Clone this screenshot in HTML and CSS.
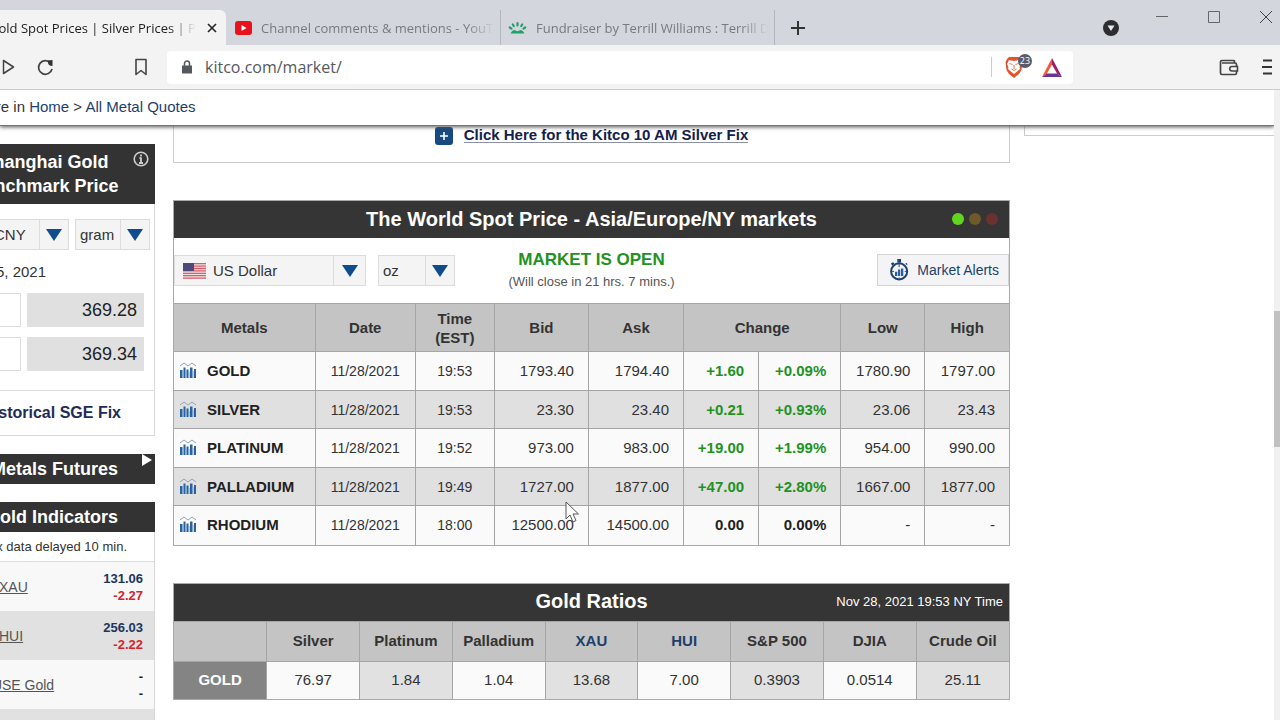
FILE: index.html
```
<!DOCTYPE html>
<html lang="en">
<head>
<meta charset="utf-8">
<title>Gold Spot Prices | Silver Prices | Platinum Prices</title>
<link rel="stylesheet" href="styles.css">
</head>
<body>
<svg class="defs" aria-hidden="true">
  <symbol id="chart" viewBox="0 0 18 18">
    <path fill="#2c62a0" d="M1 9h2.500v8H1zM4.500 6.500h2V17h-2zM7.500 8.500h2V17h-2zM11 6.500h2.500V17H11zM15 8h2v9h-2z"/>
    <path fill="#7fa6cf" d="M3.500 10h1v7h-1zM6.500 10h1v7h-1zM9.500 11h1v6h-1zM13.500 10h1v7h-1z"/>
    <path fill="none" stroke="#8fa3ba" stroke-width="1" d="M1 5l4-3 4 3 4-3 4 3"/>
  </symbol>
  <symbol id="down" viewBox="0 0 16 12"><path fill="#104d8e" d="M0 0h16L8 12z"/></symbol>
</svg>

<header class="tabs">
  <div class="tab active"><span class="tab-title">Gold Spot Prices | Silver Prices | P</span>
    <button class="icon" aria-label="Close tab"><svg width="12" height="12" viewBox="0 0 12 12"><path d="M2 2l8 8M10 2l-8 8" stroke="#222" stroke-width="1.600"/></svg></button>
  </div>
  <div class="tab yt">
    <svg width="17" height="14" viewBox="0 0 17 14"><rect width="17" height="14" rx="3" fill="#e8121c"/><path d="M6.500 4v6l5-3z" fill="#fff"/></svg>
    <span class="tab-title">Channel comments &amp; mentions - YouT</span>
  </div>
  <div class="tab fund">
    <svg width="20" height="14" viewBox="0 0 20 14" stroke="#22a06b" stroke-width="2.200" stroke-linecap="round"><path d="M9.500 2v2.500M4.800 3.500l1 1.500M14.200 3.500l-1 1.500M1.800 6.500l1.700 1.200M17.200 6.500l-1.700 1.200"/><path d="M2.500 12.500c1-2.500 3-3.500 4.500-3.500.8 1.500 4.200 1.500 5 0 1.500 0 3.500 1 4.500 3.500z" fill="#22a06b" stroke="none"/></svg>
    <span class="tab-title">Fundraiser by Terrill Williams : Terrill D</span>
  </div>
  <button class="icon plus" aria-label="New tab"><svg width="14" height="14" viewBox="0 0 14 14"><path d="M7 0v14M0 7h14" stroke="#333" stroke-width="2"/></svg></button>
  <div class="window">
    <button class="icon search" aria-label="Search tabs"><svg width="18" height="18" viewBox="0 0 18 18"><circle cx="9" cy="9" r="8" fill="#2b2d31"/><path d="M5.500 6.500h7L9 12z" fill="#e8e9ec"/></svg></button>
    <button class="icon" aria-label="Minimize"><svg width="14" height="14" viewBox="0 0 14 14"><path d="M1 6.500h12" stroke="#666"/></svg></button>
    <button class="icon" aria-label="Maximize"><svg width="14" height="14" viewBox="0 0 14 14"><path d="M1.500 1.500h11v11h-11z" fill="none" stroke="#666"/></svg></button>
    <button class="icon" aria-label="Close"><svg width="14" height="14" viewBox="0 0 14 14"><path d="M1 1l12 12M13 1L1 13" stroke="#444"/></svg></button>
  </div>
</header>

<nav class="toolbar" aria-label="Browser">
  <button class="icon forward" aria-label="Forward"><svg width="16" height="18" viewBox="0 0 16 18"><path d="M3.500 2.500v13l10-6.500z" fill="none" stroke="#444" stroke-width="1.500" stroke-linejoin="round"/></svg></button>
  <button class="icon reload" aria-label="Reload"><svg width="18" height="18" viewBox="0 0 18 18"><path d="M14.500 5A6.800 6.800 0 1 0 16 11" fill="none" stroke="#444" stroke-width="1.700"/><path d="M11.500 2.500l5-.5v6q-4 0-4.500-3z" fill="#333"/></svg></button>
  <button class="icon mark" aria-label="Bookmark"><svg width="14" height="18" viewBox="0 0 14 18"><path d="M2 1.500h10v15l-5-4-5 4z" fill="none" stroke="#444" stroke-width="1.600" stroke-linejoin="round"/></svg></button>
  <div class="address">
    <svg width="12" height="14" viewBox="0 0 12 14"><path d="M1 5.500h10v8H1z" fill="#55585c"/><path d="M3.500 6V3.500a2.500 2.500 0 0 1 5 0V6" fill="none" stroke="#55585c" stroke-width="1.500"/></svg>
    <input type="text" aria-label="Address" value="kitco.com/market/">
    <div class="shields">
      <svg width="20" height="23" viewBox="0 0 20 23"><path d="M5 1h10l2 2 1.500 3-1 8-2.500 4-5 4-5-4-2.500-4-1-8L3 3z" fill="#e4532a"/><path d="M5 4l5 1 5-1 2 4-1.500 3 .5 2-3.500 3L10 18l-2.500-2L4 13l.5-2L3 8z" fill="#fff"/><path d="M5.500 7.500l3 1M14.500 7.500l-3 1M10 9v4M7.500 13l2.500 1.500 2.500-1.500" stroke="#e07a58" stroke-width="1" fill="none"/></svg>
      <span class="badge">23</span>
    </div>
    <svg width="20" height="19" viewBox="0 0 20 19"><path d="M10 0v6.500L5 15.500 0 19z" fill="#ee5c36"/><path d="M10 0l10 19-5-3.500-5-9z" fill="#9b2069"/><path d="M0 19l5-3.500h10l5 3.500z" fill="#6a3591"/></svg>
  </div>
  <button class="icon wallet" aria-label="Wallet"><svg width="20" height="17" viewBox="0 0 20 17"><path d="M15.500 4V2.500Q15.500 1.500 14 1.500H3Q1.500 1.500 1.500 3v11Q1.500 15.500 3 15.500h13q1.500 0 1.500-1.500V5.500Q17.500 4 16 4H3" fill="none" stroke="#444" stroke-width="1.700"/><path d="M18.500 7.500H13a2 2 0 0 0 0 4.500h5.500z" fill="#f2f2f3" stroke="#444" stroke-width="1.600"/></svg></button>
  <button class="icon" aria-label="Menu"><svg width="11" height="16" viewBox="0 0 11 16"><path d="M1 1.500h9M0 8h10M1 14.500h9" stroke="#333" stroke-width="1.800"/></svg></button>
</nav>

<div class="viewport">
  <div class="page">
    <div class="crumbs"><span>You are in <a href="#">Home</a> &gt; <a href="#">All Metal Quotes</a></span></div>
    <div class="columns">
      <aside class="side">
        <section class="box sge">
          <h2 class="two">Shanghai Gold<br>Benchmark Price</h2>
          <svg class="info" width="16" height="16" viewBox="0 0 16 16"><circle cx="8" cy="8" r="6.800" fill="none" stroke="#ccc" stroke-width="1.600"/><path d="M8 3.500v2M8 6.500v5.500M6.500 7H8M6 12h4" stroke="#ccc" stroke-width="1.800"/></svg>
          <div class="picks">
            <div class="pick cny"><select aria-label="Currency"><option>CNY</option></select><span class="arrow"><svg width="16" height="12"><use href="#down"/></svg></span></div>
            <div class="pick gram"><select aria-label="Unit"><option>gram</option></select><span class="arrow"><svg width="16" height="12"><use href="#down"/></svg></span></div>
          </div>
          <p class="date">Nov 25, 2021</p>
          <div class="quote"><span class="label"></span><span class="value">369.28</span></div>
          <div class="quote"><span class="label"></span><span class="value">369.34</span></div>
          <a class="history" href="#">Historical SGE Fix</a>
        </section>
        <section class="futures"><h2>Metals Futures</h2><svg class="play" width="10" height="12" viewBox="0 0 10 12"><path d="M0 0l10 6-10 6z" fill="#fff"/></svg></section>
        <section class="box">
          <h2>Gold Indicators</h2>
          <p class="note">Index data delayed 10 min.</p>
          <div class="ind"><a href="#">XAU</a><div><b>131.06</b><b class="red">-2.27</b></div></div>
          <div class="ind alt"><a href="#">HUI</a><div><b>256.03</b><b class="red">-2.22</b></div></div>
          <div class="ind jse"><a href="#">JSE Gold</a><div><b class="none">-</b><b class="none">-</b></div></div>
          <div class="ind alt"></div>
        </section>
      </aside>

      <main>
        <div class="fix"><svg width="18" height="18" viewBox="0 0 18 18"><rect width="18" height="18" rx="3" fill="#164a80"/><path d="M9 5v8M5 9h8" stroke="#fff" stroke-width="1.600"/></svg><a href="#">Click Here for the Kitco 10 AM Silver Fix</a></div>

        <section class="panel world">
          <div class="title"><span></span><h1>The World Spot Price - Asia/Europe/NY markets</h1><div class="lights"><i class="on"></i><i class="amber"></i><i class="stop"></i></div></div>
          <div class="controls">
            <div class="group">
              <div class="pick dollar">
                <svg class="flag" width="23" height="16" viewBox="0 0 23 16"><path fill="#f1dfe2" d="M0 0h23v16H0z"/><path stroke="#d8606d" stroke-width="1.300" d="M0 .7h23M0 3.100h23M0 5.500h23M0 7.900h23M0 10.300h23M0 12.700h23M0 15.200h23"/><path fill="#4b4a78" d="M0 0h11v8H0z"/></svg>
                <select aria-label="Currency"><option>US Dollar</option></select><span class="arrow"><svg width="16" height="12"><use href="#down"/></svg></span></div>
              <div class="pick oz"><select aria-label="Weight"><option>oz</option></select><span class="arrow"><svg width="16" height="12"><use href="#down"/></svg></span></div>
            </div>
            <div class="status"><strong>MARKET IS OPEN</strong><small>(Will close in 21 hrs. 7 mins.)</small></div>
            <button class="alerts"><svg width="22" height="24" viewBox="0 0 22 24"><circle cx="11" cy="13.500" r="8.700" fill="none" stroke="#1c4474" stroke-width="2.200"/><path d="M9 0h4v4H9zM2 5l2.500-1.500L6 5 3.500 7.500zM17.500 5l2-.5.5 2.500z" fill="#1c4474"/><path d="M6.500 14h2.500v4.500H6.500zM9.700 11.500h2.500v7H9.700zM13 10.500h2.500v8H13z" fill="#2c5f9c"/><path d="M11 5v4M3 13.500h2.500M17 13.500h2M11 20v2" stroke="#1c4474"/></svg>Market Alerts</button>
          </div>
          <table class="spot">
            <colgroup><col class="c-metal"><col class="c-date"><col class="c-time"><col class="c-bid"><col class="c-ask"><col class="c-chg"><col class="c-pct"><col class="c-low"><col class="c-low"></colgroup>
            <thead><tr><th>Metals</th><th>Date</th><th>Time<br>(EST)</th><th>Bid</th><th>Ask</th><th colspan="2">Change</th><th>Low</th><th>High</th></tr></thead>
            <tbody>
              <tr><th scope="row"><svg width="18" height="18"><use href="#chart"/></svg>GOLD</th><td class="when">11/28/2021</td><td class="when">19:53</td><td>1793.40</td><td>1794.40</td><td class="up">+1.60</td><td class="up">+0.09%</td><td>1780.90</td><td>1797.00</td></tr>
              <tr><th scope="row"><svg width="18" height="18"><use href="#chart"/></svg>SILVER</th><td class="when">11/28/2021</td><td class="when">19:53</td><td>23.30</td><td>23.40</td><td class="up">+0.21</td><td class="up">+0.93%</td><td>23.06</td><td>23.43</td></tr>
              <tr><th scope="row"><svg width="18" height="18"><use href="#chart"/></svg>PLATINUM</th><td class="when">11/28/2021</td><td class="when">19:52</td><td>973.00</td><td>983.00</td><td class="up">+19.00</td><td class="up">+1.99%</td><td>954.00</td><td>990.00</td></tr>
              <tr><th scope="row"><svg width="18" height="18"><use href="#chart"/></svg>PALLADIUM</th><td class="when">11/28/2021</td><td class="when">19:49</td><td>1727.00</td><td>1877.00</td><td class="up">+47.00</td><td class="up">+2.80%</td><td>1667.00</td><td>1877.00</td></tr>
              <tr><th scope="row"><svg width="18" height="18"><use href="#chart"/></svg>RHODIUM</th><td class="when">11/28/2021</td><td class="when">18:00</td><td>12500.00</td><td>14500.00</td><td class="flat">0.00</td><td class="flat">0.00%</td><td>-</td><td>-</td></tr>
            </tbody>
          </table>
        </section>

        <section class="panel">
          <div class="title"><span></span><h2>Gold Ratios</h2><time>Nov 28, 2021 19:53 NY Time</time></div>
          <table class="ratios">
            <thead><tr><td></td><th>Silver</th><th>Platinum</th><th>Palladium</th><th><a href="#">XAU</a></th><th><a href="#">HUI</a></th><th>S&amp;P 500</th><th>DJIA</th><th>Crude Oil</th></tr></thead>
            <tbody><tr><th scope="row">GOLD</th><td>76.97</td><td>1.84</td><td>1.04</td><td>13.68</td><td>7.00</td><td>0.3903</td><td>0.0514</td><td>25.11</td></tr></tbody>
          </table>
        </section>
      </main>

      <aside class="ad"></aside>
    </div>
  </div>
  <div class="scroll"><span class="thumb"></span></div>
</div>
<svg class="cursor" width="14" height="22" viewBox="0 0 14 22"><path d="M1 1v17l4-4 3 7 3-1.500L8 13h5.500z" fill="#fff" stroke="#555"/></svg>
</body>
</html>
```

FILE: styles.css
```
* { box-sizing: border-box; }
body {
  margin: 0;
  height: 100vh;
  overflow: hidden;
  display: flex;
  flex-direction: column;
  background: #fff;
  color: #333;
  font: 15px/20px "Liberation Sans", Arial, sans-serif;
}
h1, h2, p { margin: 0; }
a { color: #1d3f6b; text-decoration: none; }
button, input, select { font: inherit; color: inherit; }
.defs { position: absolute; width: 0; height: 0; }
.icon { border: 0; padding: 0; background: none; display: flex; }

/* browser chrome */
.tabs {
  flex: none;
  display: flex;
  align-items: flex-end;
  height: 45px;
  margin-left: -11px;
  background: #d3d6dc;
  color: #777a80;
  font: 13px/20px "Open Sans", sans-serif;
}
.tab { display: flex; align-items: center; height: 35px; flex: none; }
.tab-title {
  flex: 1;
  overflow: hidden;
  white-space: nowrap;
  mask-image: linear-gradient(to right, #000 calc(100% - 28px), transparent);
}
.active { width: 237px; padding-right: 8px; gap: 10px; background: #f3f3f4; color: #222; border-radius: 0 6px 0 0; }
.yt { width: 275px; padding: 0 6px 0 9px; gap: 9px; border-right: 1px solid #b4b7bd; }
.fund { width: 274px; padding: 0 6px 0 7px; gap: 8px; border-right: 1px solid #b4b7bd; }
.plus { padding: 0 0 10px 16px; }
.window { margin-left: auto; height: 45px; display: flex; align-items: flex-start; gap: 38px; padding: 10px 7px 0 0; }
.search { padding-top: 9px; margin-right: -3px; }
.toolbar {
  flex: none;
  display: flex;
  align-items: center;
  height: 45px;
  padding-right: 7px;
  background: #f3f3f4;
  border-bottom: 1px solid #ccc;
}
.reload { margin-left: 20px; }
.mark { margin: 0 19px 0 80px; }
.address {
  flex: 1;
  display: flex;
  align-items: center;
  gap: 12px;
  height: 33px;
  padding: 0 11px 0 14px;
  background: #fff;
  border-radius: 4px;
}
.address input { flex: 1; border: 0; outline: 0; padding: 0; background: none; color: #55585c; font: 16px/20px "Open Sans", sans-serif; }
.shields { display: flex; padding-left: 12px; border-left: 1px solid #ccc; height: 20px; align-items: center; position: relative; margin-right: 6px; }
.badge {
  position: absolute;
  left: 26px;
  top: -3px;
  width: 14px;
  height: 14px;
  border-radius: 7px;
  background: #595c68;
  color: #fff;
  font: 9px/14px "Open Sans", sans-serif;
  text-align: center;
}
.wallet { margin: 0 23px 0 146px; }

/* web page */
.viewport { flex: 1; min-height: 0; display: flex; }
.page { flex: 1; min-width: 0; display: flex; flex-direction: column; overflow: hidden; }
.scroll { width: 6px; background: #f1f1f1; }
.thumb { display: block; height: 136px; margin-top: 221px; background: #c1c1c1; }
.crumbs {
  flex: none;
  height: 36px;
  line-height: 34px;
  background: #fff;
  border-bottom: 1px solid #777;
  box-shadow: 0 1px 4px #555;
  position: relative;
  z-index: 1;
  white-space: nowrap;
}
.crumbs span { display: block; margin-left: -42px; }
.columns { display: flex; flex: 1; min-height: 0; align-items: flex-start; }
.side { flex: none; width: 222px; margin: 18px 18px 0 -67px; display: flex; flex-direction: column; gap: 18px; }
.side section { position: relative; }
.box { border-right: 1px solid #d8d8d8; border-bottom: 1px solid #d8d8d8; }
.side h2 { padding: 3px 37px 3px 0; background: #333; color: #fff; font: bold 18px/24px "Liberation Sans", Arial, sans-serif; text-align: right; }
.box h2 { margin-right: -1px; }
.side .two { padding: 6px 34px 6px 36px; text-align: center; white-space: nowrap; }
.info { position: absolute; top: 7px; right: 5px; }
.play { position: absolute; right: 3px; top: 0; }
.picks { display: flex; justify-content: flex-end; gap: 6px; padding: 15px 4px 0 0; }
.pick { position: relative; display: flex; align-items: center; height: 31px; background: #f4f4f5; border: 1px solid #dcdcdc; }
.pick select { appearance: none; border: 0; outline: 0; background: none; width: 100%; height: 100%; padding: 0 4px; }
.arrow { position: absolute; right: 0; top: 0; bottom: 0; width: 29px; border-left: 1px solid #dcdcdc; display: flex; align-items: center; justify-content: center; pointer-events: none; }
.cny { width: 85px; }
.cny select { padding-left: 9px; }
.gram { width: 75px; }
.date { padding: 12px 108px 11px 0; text-align: right; }
.quote { display: flex; gap: 6px; padding: 0 10px 10px 0; line-height: 34px; height: 44px; }
.label { flex: 1; border: 1px solid #ddd; }
.value { width: 117px; padding-right: 7px; background: #e0e0e0; color: #222; font-size: 18px; text-align: right; }
.history { display: block; height: 45px; margin-top: 9px; padding-right: 33px; border-top: 1px solid #ddd; font-size: 16px; font-weight: bold; line-height: 44px; text-align: right; color: #1d2d58; }
.note { height: 30px; padding-right: 27px; border-bottom: 1px solid #ddd; font-size: 13px; line-height: 29px; text-align: right; }
.ind { display: flex; align-items: center; justify-content: space-between; height: 49px; padding: 0 11px 0 66px; background: #f8f8f8; font-size: 14px; }
.ind a { color: #555; text-decoration: underline; }
.jse a { margin-left: -4px; }
.ind.alt { background: #e1e1e1; }
.ind b { display: block; font-size: 13px; line-height: 17px; text-align: right; color: #1d3560; }
.ind .red { color: #d4232c; }
.ind .none { color: #222; }

main { flex: 1; min-width: 0; }
.fix {
  display: flex;
  justify-content: center;
  gap: 11px;
  height: 37px;
  border: 1px solid #ccc;
  border-top: 0;
  font-weight: bold;
}
.fix svg { margin-top: 1px; }
.fix a { color: #14204c; height: 17px; line-height: 18px; border-bottom: 1px solid #8a90a5; }
.panel { margin-top: 37px; border: 1px solid #aaa; }
.title { display: grid; grid-template-columns: 1fr auto 1fr; align-items: center; height: 37px; background: #353535; color: #fff; }
.title h1, .title h2 { font-size: 20px; line-height: 24px; padding-bottom: 2px; }
.title time { justify-self: end; padding-right: 6px; font-size: 13px; }
.lights { justify-self: end; display: flex; gap: 5px; padding: 0 11px 2px 0; }
.lights i { width: 12px; height: 12px; border-radius: 50%; background: #62d61f; }
.lights .amber { background: #6f5829; }
.lights .stop { background: #6b3030; }
.controls { display: grid; grid-template-columns: 1fr auto 1fr; height: 65px; }
.group { display: flex; gap: 12px; padding-top: 17px; }
.dollar { width: 192px; }
.flag { flex: none; margin-left: 8px; }
.dollar select { padding-left: 7px; }
.dollar .arrow { width: 32px; }
.oz { width: 77px; }
.status { padding-top: 12px; text-align: center; }
.status strong { display: block; font-size: 17px; color: #22921f; }
.status small { display: block; font-size: 13px; color: #555; padding-top: 2px; }
.alerts {
  justify-self: end;
  display: flex;
  align-items: center;
  gap: 8px;
  width: 132px;
  height: 32px;
  margin-top: 16px;
  padding: 0 9px 0 11px;
  border: 1px solid #d4d4d6;
  background: #f4f4f6;
  color: #1d3f6b;
  font-size: 14px;
  white-space: nowrap;
}

table { width: 100%; table-layout: fixed; border-collapse: collapse; }
th, td { padding: 0; border: 1px solid #a5a5a5; }
tr > :first-child { border-left: 0; }
tr > :last-child { border-right: 0; }
tbody tr:last-child > * { border-bottom: 0; }
thead th, thead td { background: #c4c4c4; }
.spot thead tr { height: 48px; }
.spot tbody tr { height: 39px; background: #fafafa; }
.spot tbody tr:nth-child(even) { height: 38px; background: #e0e0e0; }
.c-metal { width: 141px; }
.c-date { width: 100px; }
.c-time { width: 79px; }
.c-bid { width: 94px; }
.c-ask { width: 95px; }
.c-chg { width: 75px; }
.c-pct { width: 82px; }
.c-low { width: 84px; }
.spot thead th { line-height: 19px; }
.spot tbody th { text-align: left; padding-left: 5px; color: #222; }
.spot tbody th svg { margin-right: 10px; vertical-align: -3px; }
.spot td { padding-right: 14px; text-align: right; color: #333; }
.spot .when { padding: 0; text-align: center; font-size: 14px; }
.spot .up { font-weight: bold; color: #22921f; }
.spot .flat { font-weight: bold; color: #222; }
.ratios { text-align: center; }
.ratios thead tr { height: 40px; }
.ratios tbody tr { height: 38px; }
.ratios tbody th { background: #848484; color: #fff; }
.ratios tbody td { background: #e1e1e1; }
.ratios tbody td:nth-child(even), .ratios tbody td:nth-child(8) { background: #fafafa; }
.ad { flex: none; width: 250px; height: 10px; margin-left: 14px; border: 1px solid #ccc; border-top: 0; border-right: 0; }
.cursor { position: absolute; left: 565px; top: 501px; }
```
